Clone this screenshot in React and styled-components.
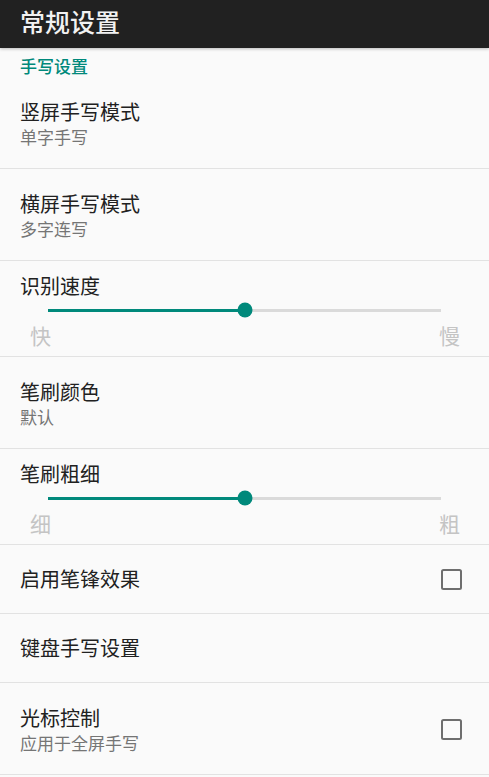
import React from 'react';
import styled, { createGlobalStyle } from 'styled-components';

const GlobalStyle = createGlobalStyle`
 body {
  margin: 0;
  background-color: #fafafa;
  font-family: "Noto Sans CJK SC", "Noto Sans", Roboto, sans-serif;
 }
`;

const AppBar = styled.header`
 height: 48px;
 background-color: #212121;
 display: flex;
 align-items: center;
 padding: 0 20px;
 box-shadow: 0 1px 3px rgba(0, 0, 0, 0.25);
 position: relative;
 z-index: 1;
`;

const AppTitle = styled.h1`
 margin: 0;
 font-size: 25px;
 font-weight: 500;
 color: #f2f2f2;
 line-height: 30px;
 margin-top: -6px;
`;

const Category = styled.div`
 padding: 7px 20px 0;
 font-size: 17px;
 line-height: 22px;
 font-weight: 500;
 color: #00897b;
`;

const Row = styled.div`
 display: flex;
 align-items: center;
 padding: ${(p) => (p.$single ? '20px 27px 20px 20px' : '21px 27px 20px 20px')};
 border-bottom: 1px solid #e2e2e2;
`;

const SliderRow = styled.div`
 padding: 11px 0 6px 0;
 border-bottom: 1px solid #e2e2e2;
`;

const TextBlock = styled.div`
 flex: 1;
 display: flex;
 flex-direction: column;
`;

const Title = styled.div`
 font-size: 20px;
 line-height: 28px;
 color: #212121;
 padding: ${(p) => (p.$indent ? '0 20px' : '0')};
`;

const Summary = styled.div`
 font-size: 17px;
 line-height: 22px;
 color: #757575;
`;

const Checkbox = styled.div`
 width: 17px;
 height: 17px;
 border: 2.5px solid #6e6e6e;
 border-radius: 2.5px;
 flex-shrink: 0;
`;

const SliderBox = styled.div`
 height: 20px;
 margin: 0 48px;
 display: flex;
 align-items: center;
 position: relative;
`;

const Track = styled.div`
 flex: 1;
 height: 3px;
 background-color: #dadada;
 position: relative;
`;

const Fill = styled.div`
 height: 100%;
 background-color: #00897b;
`;

const Thumb = styled.div`
 position: absolute;
 top: 50%;
 width: 15px;
 height: 15px;
 border-radius: 50%;
 background-color: #00897b;
 transform: translate(-50%, -50%);
`;

const SliderLabels = styled.div`
 display: flex;
 justify-content: space-between;
 padding: 0 29px 0 30px;
 font-size: 21px;
 line-height: 30px;
 color: #c4c4c4;
`;

const Pref = ({ title, summary, checkbox }) => (
 <Row $single={!summary}>
  <TextBlock>
   <Title>{title}</Title>
   {summary && <Summary>{summary}</Summary>}
  </TextBlock>
  {checkbox && <Checkbox />}
 </Row>
);

const SliderPref = ({ title, value, min, max }) => (
 <SliderRow>
  <Title $indent>{title}</Title>
  <SliderBox>
   <Track>
    <Fill style={{ width: `${value}%` }} />
    <Thumb style={{ left: `${value}%` }} />
   </Track>
  </SliderBox>
  <SliderLabels>
   <span>{min}</span>
   <span>{max}</span>
  </SliderLabels>
 </SliderRow>
);

const App = () => (
 <>
  <GlobalStyle />
  <AppBar>
   <AppTitle>常规设置</AppTitle>
  </AppBar>
  <Category>手写设置</Category>
  <Pref title="竖屏手写模式" summary="单字手写" />
  <Pref title="横屏手写模式" summary="多字连写" />
  <SliderPref title="识别速度" value={50} min="快" max="慢" />
  <Pref title="笔刷颜色" summary="默认" />
  <SliderPref title="笔刷粗细" value={50} min="细" max="粗" />
  <Pref title="启用笔锋效果" checkbox />
  <Pref title="键盘手写设置" />
  <Pref title="光标控制" summary="应用于全屏手写" checkbox />
 </>
);

export default App;
